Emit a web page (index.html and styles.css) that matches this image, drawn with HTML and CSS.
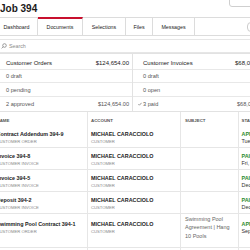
FILE: index.html
```html
<!DOCTYPE html>
<html>
<head>
<meta charset="utf-8">
<link rel="stylesheet" href="styles.css">
</head>
<body>
<div class="page">
  <header class="head">
    <h1 class="title">Job 394</h1>
    <button class="corner-btn"></button>
  </header>
  <nav class="tabs">
    <a class="tab tab-dash">Dashboard</a>
    <a class="tab tab-docs active">Documents</a>
    <a class="tab tab-sel">Selections</a>
    <a class="tab tab-files">Files</a>
    <a class="tab tab-msg">Messages</a>
    <div class="tab-fill"><span class="pill"></span></div>
  </nav>
  <div class="search">
    <svg class="search-icon" width="6" height="6" viewBox="0 0 6 6"><circle cx="3.5" cy="2.5" r="1.8" fill="none" stroke="#777" stroke-width="0.7"/><line x1="2.2" y1="3.8" x2="0.6" y2="5.4" stroke="#777" stroke-width="0.7"/></svg>
    <span>Search</span>
  </div>
  <div class="cards">
    <section class="card card-orders">
      <div class="card-head"><span>Customer Orders</span><span>$124,654.00</span></div>
      <div class="card-row first"><span>0 draft</span></div>
      <div class="card-row"><span>0 pending</span></div>
      <div class="card-row"><span>2 approved</span><span>$124,654.00</span></div>
    </section>
    <section class="card card-invoices">
      <div class="card-head"><span>Customer Invoices</span><span>$68,054.00</span></div>
      <div class="card-row first"><span>0 draft</span></div>
      <div class="card-row"><span>0 open</span></div>
      <div class="card-row"><span><svg class="check" width="4" height="4" viewBox="0 0 4 4"><path d="M0.4 2.2 L1.4 3.2 L3.6 0.8" fill="none" stroke="#555" stroke-width="0.6"/></svg>3 paid</span><span>$68,054.00</span></div>
    </section>
  </div>
  <div class="table">
    <div class="trow thead">
      <div class="cell c-name">Name</div>
      <div class="cell c-acct">Account</div>
      <div class="cell c-subj">Subject</div>
      <div class="cell c-stat">Status</div>
    </div>
    <div class="trow">
      <div class="cell c-name"><span class="name">Contract Addendum 394-9</span><span class="sub">Customer Order</span></div>
      <div class="cell c-acct"><span class="name">MICHAEL CARACCIOLO</span><span class="sub">Customer</span></div>
      <div class="cell c-subj"></div>
      <div class="cell c-stat"><span class="status ok">Approved</span><span class="date">Tue, Sep 12</span></div>
    </div>
    <div class="trow">
      <div class="cell c-name"><span class="name">Invoice 394-8</span><span class="sub">Customer Invoice</span></div>
      <div class="cell c-acct"><span class="name">MICHAEL CARACCIOLO</span><span class="sub">Customer</span></div>
      <div class="cell c-subj"></div>
      <div class="cell c-stat"><span class="status ok">Paid</span><span class="date">Fri, Dec 8</span></div>
    </div>
    <div class="trow">
      <div class="cell c-name"><span class="name">Invoice 394-5</span><span class="sub">Customer Invoice</span></div>
      <div class="cell c-acct"><span class="name">MICHAEL CARACCIOLO</span><span class="sub">Customer</span></div>
      <div class="cell c-subj"></div>
      <div class="cell c-stat"><span class="status ok">Paid</span><span class="date">Dec 1</span></div>
    </div>
    <div class="trow">
      <div class="cell c-name"><span class="name">Deposit 394-2</span><span class="sub">Customer Invoice</span></div>
      <div class="cell c-acct"><span class="name">MICHAEL CARACCIOLO</span><span class="sub">Customer</span></div>
      <div class="cell c-subj"></div>
      <div class="cell c-stat"><span class="status ok">Paid</span><span class="date">Dec 1</span></div>
    </div>
    <div class="trow tall">
      <div class="cell c-name"><span class="name">Swimming Pool Contract 394-1</span><span class="sub">Customer Order</span></div>
      <div class="cell c-acct"><span class="name">MICHAEL CARACCIOLO</span><span class="sub">Customer</span></div>
      <div class="cell c-subj"><span class="subject">Swimming Pool Agreement | Hang 10 Pools</span></div>
      <div class="cell c-stat"><span class="status ok">Approved</span><span class="date">Sep 5</span></div>
    </div>
    <div class="trow">
      <div class="cell c-name"><span class="name">Selections 394</span><span class="sub">Selection</span></div>
      <div class="cell c-acct"><span class="name">MICHAEL CARACCIOLO</span><span class="sub">Customer</span></div>
      <div class="cell c-subj"></div>
      <div class="cell c-stat"><span class="status ok">Approved</span><span class="date">Aug 2</span></div>
    </div>
  </div>
</div>
</body>
</html>
```
FILE: styles.css
```css
body {
  margin: 0;
  width: 250px;
  height: 250px;
  overflow: hidden;
  background: #fff;
  font-family: "Liberation Sans", Arial, sans-serif;
  color: #222;
}

.page {
  margin-left: -4px;
  width: 258px;
}

.head {
  display: flex;
  justify-content: space-between;
  align-items: flex-start;
  height: 17px;
}

.title {
  margin: 0;
  padding-left: 4px;
  font-size: 10px;
  font-weight: 700;
  line-height: 17px;
  color: #1a1a1a;
}

.corner-btn {
  width: 25px;
  height: 16px;
  margin-top: -9px;
  padding: 0;
  box-sizing: border-box;
  border: 1px solid #cfcfcf;
  border-radius: 3px;
  background: #fff;
}

.tabs {
  display: flex;
  height: 19px;
  box-sizing: border-box;
  border-bottom: 1px solid #dcdcdc;
}

.tab {
  flex-shrink: 0;
  box-sizing: border-box;
  height: 18px;
  border-top: 1px solid #dcdcdc;
  border-right: 1px solid #dcdcdc;
  display: flex;
  align-items: center;
  justify-content: center;
  font-size: 5.3px;
  color: #222;
}

.tab-dash { width: 42px; }
.tab-docs { width: 45px; }
.tab-sel { width: 43px; }
.tab-files { width: 27px; }
.tab-msg { width: 42px; }

.tab.active {
  border-top: 2px solid #c8102e;
}

.tab-fill {
  flex: 1;
  border-top: 1px solid #dcdcdc;
  display: flex;
  align-items: center;
}

.pill {
  margin-left: 52px;
  width: 20px;
  height: 10px;
  box-sizing: border-box;
  border: 1px solid #cccccc;
  border-radius: 4px;
}

.search {
  margin-top: 3px;
  height: 14px;
  box-sizing: border-box;
  border: 1px solid #e6e6e6;
  display: flex;
  align-items: center;
  gap: 2px;
  padding-left: 4px;
  font-size: 5.3px;
  color: #8a8a8a;
}

.search-icon { display: block; }

.cards {
  display: flex;
}

.card {
  flex: 0 0 137px;
  box-sizing: border-box;
  border: 1px solid #e2e2e2;
}

.card + .card {
  margin-left: -1px;
}

.card-head {
  height: 16px;
  box-sizing: border-box;
  padding: 3px 3px 0 9px;
  border-bottom: 1px solid #e8e8e8;
  display: flex;
  justify-content: space-between;
  align-items: center;
  font-size: 6px;
  color: #1a1a1a;
}

.card-row {
  height: 14px;
  box-sizing: border-box;
  padding: 0 3px 0 9px;
  border-bottom: 1px solid #e8e8e8;
  display: flex;
  justify-content: space-between;
  align-items: center;
  font-size: 5.6px;
  color: #555;
}

.card-row.first { height: 13px; }
.card-row:last-child { border-bottom: 0; }

.card-invoices .card-head,
.card-invoices .card-row {
  padding-left: 10px;
}

.check {
  margin-left: -5px;
  margin-right: 1px;
}

.table {
  margin-left: -4px;
}

.trow {
  display: grid;
  grid-template-columns: 95px 93px 58px 60px;
  height: 22px;
  box-sizing: border-box;
  border-bottom: 1px solid #e6e6e6;
}

.cell {
  display: flex;
  flex-direction: column;
  justify-content: center;
  padding-top: 2px;
  min-width: 0;
  overflow: hidden;
}

.cell + .cell {
  border-left: 1px solid #e6e6e6;
}

.c-name { padding-left: 4.5px; }
.c-acct { padding-left: 3px; }
.c-subj { padding-left: 4px; padding-right: 4px; }
.c-stat { padding-left: 2.5px; }

.thead {
  height: 14px;
  border-bottom: 0;
}

.thead .cell {
  padding-top: 3px;
  font-size: 4.4px;
  font-weight: 700;
  text-transform: uppercase;
  color: #555;
}

.tall {
  height: 34px;
}

.tall .cell {
  padding-bottom: 8px;
}

.name {
  font-size: 5.4px;
  font-weight: 700;
  line-height: 7px;
  color: #222;
  white-space: nowrap;
}

.sub {
  font-size: 4.2px;
  line-height: 7px;
  color: #888;
  text-transform: uppercase;
  white-space: nowrap;
}

.subject {
  font-size: 5.5px;
  line-height: 8.3px;
  color: #666;
}

.status {
  font-size: 5.4px;
  font-weight: 700;
  line-height: 7px;
  text-transform: uppercase;
  white-space: nowrap;
}

.status.ok { color: #2e8b2e; }

.date {
  font-size: 5.4px;
  line-height: 7px;
  color: #333;
  white-space: nowrap;
}
```
